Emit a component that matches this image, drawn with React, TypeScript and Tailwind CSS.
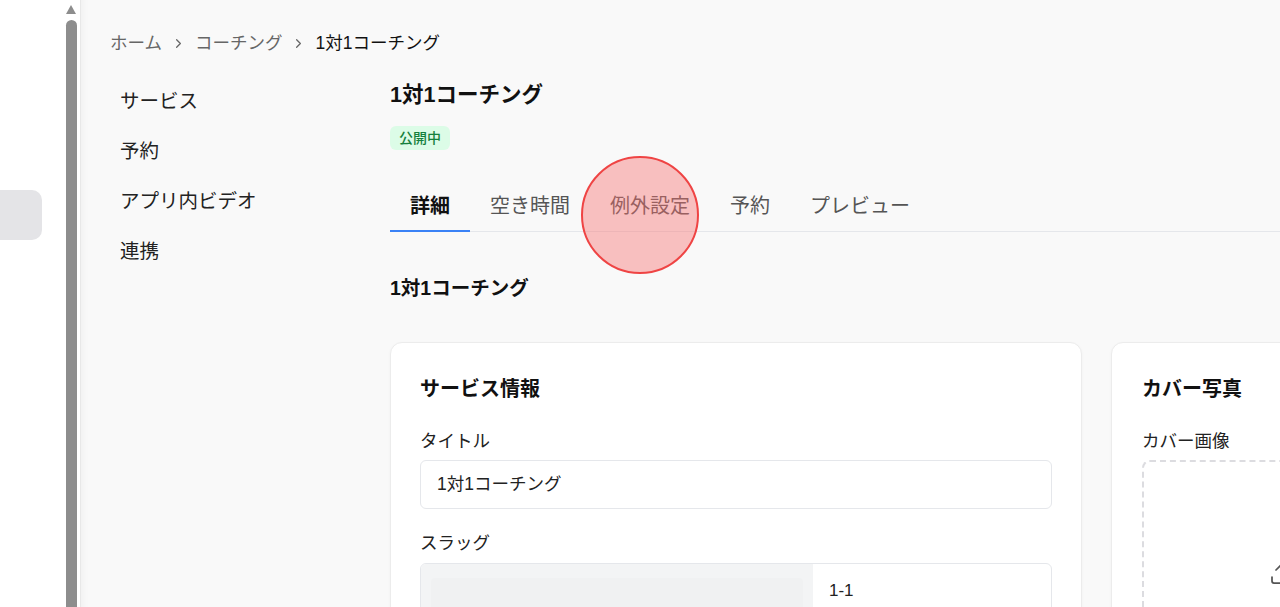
import React from "react";
import { ChevronRight, Upload } from "lucide-react";

const font = "font-['Liberation_Sans','Noto_Sans_CJK_JP',sans-serif]";

export default function App() {
  const tabs = ["詳細", "空き時間", "例外設定", "予約", "プレビュー"];
  return (
    <div className={`relative flex h-[607px] w-[1280px] overflow-hidden bg-white ${font}`}>
      {/* left strip */}
      <div className="w-[66px] shrink-0 bg-white pt-[190px]">
        <div className="ml-[-10px] h-[50px] w-[52px] rounded-[10px] bg-[#e4e4e7]" />
      </div>
      {/* scrollbar */}
      <div className="flex w-[14px] shrink-0 flex-col bg-white">
        <div className="mt-[5px] h-0 w-0 border-x-[5px] border-b-[9px] border-x-transparent border-b-[#8d8d8d]" />
        <div className="mt-[6px] w-[11px] flex-1 rounded-t-full bg-[#8d8d8d]" />
      </div>
      {/* main */}
      <div className="flex min-w-0 flex-1 flex-col border-l border-[#e8e8e8] bg-[#f9f9f9] pl-[29px] pt-[31px] shadow-[inset_10px_0_10px_-10px_rgba(0,0,0,0.06)]">
        <nav className="flex h-6 items-center text-[17.5px] text-[#666]">
          <span>ホーム</span>
          <ChevronRight className="mx-[9px] h-[15px] w-[15px] text-[#666]" strokeWidth={2} />
          <span>コーチング</span>
          <ChevronRight className="mx-[9px] h-[15px] w-[15px] text-[#666]" strokeWidth={2} />
          <span className="text-[#111]">1対1コーチング</span>
        </nav>
        <div className="mt-[25px] flex">
          <ul className="-mt-[3px] w-[280px] shrink-0 pl-[10px] text-[19.5px] text-[#222]">
            {["サービス", "予約", "アプリ内ビデオ", "連携"].map((t) => (
              <li key={t} className="flex h-[50px] items-center">
                {t}
              </li>
            ))}
          </ul>
          <div className="min-w-0 flex-1 pt-[1px]">
            <h1 className="text-[21.5px] font-bold leading-[28px] text-[#111]">1対1コーチング</h1>
            <span className="mt-[17px] inline-flex h-6 items-center rounded-md bg-[#dcfce7] px-[9px] text-[14px] font-medium text-[#15803d]">
              公開中
            </span>
            <div className="mt-[30px] flex border-b border-[#e5e7eb]">
              {tabs.map((t, i) => (
                <div
                  key={t}
                  className={`-mb-px border-b-2 px-5 pb-[10px] pt-[12px] text-[20px] leading-[28px] ${
                    i === 0 ? "border-[#3b82f6] font-bold text-[#111]" : "border-transparent text-[#555]"
                  }`}
                >
                  {t}
                </div>
              ))}
            </div>
            <h2 className="mt-[42px] text-[19.5px] font-bold leading-[28px] text-[#111]">1対1コーチング</h2>
            <div className="mt-[40px] flex gap-[29px]">
              <div className="w-[692px] shrink-0 rounded-[12px] border border-[#ececec] bg-white px-[29px] pt-[32px] shadow-[0_1px_3px_rgba(0,0,0,0.04)]">
                <h3 className="text-[20px] font-bold leading-[28px] text-[#111]">サービス情報</h3>
                <div className="mt-[26px] text-[17.5px] leading-[24px] text-[#222]">タイトル</div>
                <div className="mt-[7px] flex h-[49px] items-center rounded-md border border-[#e5e7eb] px-4 text-[17.5px] text-[#222]">
                  1対1コーチング
                </div>
                <div className="mt-[22px] text-[17.5px] leading-[24px] text-[#222]">スラッグ</div>
                <div className="mt-2 flex h-[60px] overflow-hidden rounded-md border border-[#e5e7eb]">
                  <div className="w-[392px] bg-[#f3f4f5] px-[10px] pt-[14px]">
                    <div className="h-full rounded-sm bg-[#f0f1f2]" />
                  </div>
                  <div className="flex flex-1 items-start px-4 pt-[14px] text-[17px] text-[#222]">1-1</div>
                </div>
              </div>
              <div className="w-[340px] shrink-0 rounded-[12px] border border-[#ececec] bg-white px-[30px] pt-[32px] shadow-[0_1px_3px_rgba(0,0,0,0.04)]">
                <h3 className="text-[20px] font-bold leading-[28px] text-[#111]">カバー写真</h3>
                <div className="mt-[26px] text-[17.5px] leading-[24px] text-[#222]">カバー画像</div>
                <div className="mt-[7px] flex h-[200px] justify-center rounded-lg border-2 border-dashed border-[#dcdce0] pt-[100px]">
                  <Upload className="h-6 w-6 text-[#555]" strokeWidth={1.75} />
                </div>
              </div>
            </div>
          </div>
        </div>
      </div>
      {/* click indicator */}
      <div className="pointer-events-none absolute left-[581px] top-[156px] h-[118px] w-[118px] rounded-full border-2 border-[#ef4444] bg-[rgba(248,113,113,0.42)]" />
    </div>
  );
}
